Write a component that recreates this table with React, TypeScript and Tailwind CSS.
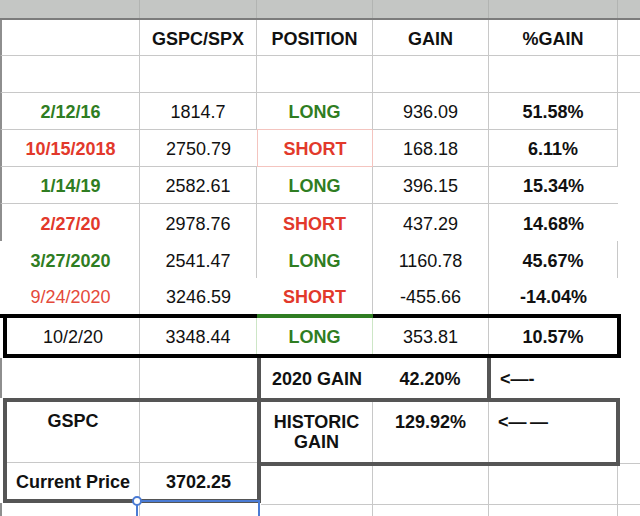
import React from "react";

const LL = "border-l-2 border-l-[#8e8e8e]";
const RB = "border-r border-r-[#c8c8c8]";
const BB = "border-b border-b-[#c8c8c8]";
const G = "text-[#2f7d22] font-bold";
const R = "text-[#e2392b] font-bold";
const B = "font-bold";

function C({
  w,
  b = "",
  c = "",
  children,
}: {
  w: string;
  b?: string;
  c?: string;
  children?: React.ReactNode;
}) {
  return (
    <div className={`${w} ${b} ${c} h-full shrink-0 flex items-center justify-center whitespace-nowrap pt-[3px]`}>
      {children}
    </div>
  );
}

export default function App() {
  return (
    <div className="relative w-[640px] h-[516px] overflow-hidden bg-white font-['Liberation_Sans',Arial,sans-serif] text-[18px] leading-[21px] text-[#111]">
      {/* top gray bar */}
      <div className="flex h-[20px] bg-[#c4c6c4] border-b-2 border-b-[#7c7c7c]">
        <div className="w-[140px] border-r border-r-[#b2b4b2]" />
        <div className="w-[117px] border-r border-r-[#b2b4b2]" />
        <div className="w-[116px] border-r border-r-[#b2b4b2]" />
        <div className="w-[116px] border-r border-r-[#b2b4b2]" />
        <div className="w-[129px] border-r border-r-[#b2b4b2]" />
        <div className="flex-1" />
      </div>

      {/* header row */}
      <div className="flex h-[36px]">
        <C w="w-[140px]" b={`${LL} ${RB} ${BB}`} />
        <C w="w-[117px]" b={`${RB} ${BB}`} c={B}>GSPC/SPX</C>
        <C w="w-[116px]" b={`${RB} ${BB}`} c={B}>POSITION</C>
        <C w="w-[116px]" b={`${RB} ${BB}`} c={B}>GAIN</C>
        <C w="w-[129px]" b={`${RB} ${BB}`} c={B}>%GAIN</C>
        <C w="w-[22px]" b={BB} />
      </div>

      {/* empty row */}
      <div className="flex h-[37px]">
        <C w="w-[140px]" b={`${LL} ${RB} ${BB}`} />
        <C w="w-[117px]" b={`${RB} ${BB}`} />
        <C w="w-[116px]" b={`${RB} ${BB}`} />
        <C w="w-[116px]" b={`${RB} ${BB}`} />
        <C w="w-[129px]" b={`${RB} ${BB}`} />
        <C w="w-[22px]" b={BB} />
      </div>

      {/* 2/12/16 */}
      <div className="flex h-[37px]">
        <C w="w-[140px]" b={`${LL} ${RB} ${BB}`} c={G}>2/12/16</C>
        <C w="w-[117px]" b={`${RB} ${BB}`}>1814.7</C>
        <C w="w-[116px]" b={`${RB} border-b border-b-[#f4c4bf]`} c={G}>LONG</C>
        <C w="w-[116px]" b={`${RB} ${BB}`}>936.09</C>
        <C w="w-[129px]" b={`${RB} ${BB}`} c={B}>51.58%</C>
      </div>

      {/* 10/15/2018 */}
      <div className="flex h-[37px]">
        <C w="w-[140px]" b={`${LL} ${RB} ${BB}`} c={R}>10/15/2018</C>
        <C w="w-[117px]" b={BB}>2750.79</C>
        <C w="w-[116px]" b="border-x border-b border-[#f4c4bf]" c={R}>SHORT</C>
        <C w="w-[116px]" b={`${RB} ${BB}`}>168.18</C>
        <C w="w-[129px]" b={`${RB} ${BB}`} c={B}>6.11%</C>
      </div>

      {/* 1/14/19 */}
      <div className="flex h-[37px]">
        <C w="w-[140px]" b={`${LL} ${RB} ${BB}`} c={G}>1/14/19</C>
        <C w="w-[117px]" b={`${RB} ${BB}`}>2582.61</C>
        <C w="w-[116px]" b={`${RB} ${BB}`} c={G}>LONG</C>
        <C w="w-[116px]" b={`${RB} ${BB}`}>396.15</C>
        <C w="w-[129px]" b={BB} c={B}>15.34%</C>
      </div>

      {/* 2/27/20 */}
      <div className="flex h-[37px]">
        <C w="w-[140px]" b={`${LL} ${RB}`} c={R}>2/27/20</C>
        <C w="w-[117px]" b={RB}>2978.76</C>
        <C w="w-[116px]" b={RB} c={R}>SHORT</C>
        <C w="w-[116px]" b={RB}>437.29</C>
        <C w="w-[129px]" c={B}>14.68%</C>
      </div>

      {/* 3/27/2020 */}
      <div className="flex h-[37px]">
        <C w="w-[140px]" b={`border-l-2 border-l-transparent ${RB}`} c={G}>3/27/2020</C>
        <C w="w-[117px]" b={RB}>2541.47</C>
        <C w="w-[116px]" b={RB} c={G}>LONG</C>
        <C w="w-[116px]" b={RB}>1160.78</C>
        <C w="w-[129px]" b={RB} c={B}>45.67%</C>
      </div>

      {/* 9/24/2020 */}
      <div className="flex h-[36px]">
        <C w="w-[140px]" b={`border-l-2 border-l-transparent ${RB}`} c="text-[#e4493a]">9/24/2020</C>
        <C w="w-[117px]">3246.59</C>
        <C w="w-[116px]" b={RB} c={R}>SHORT</C>
        <C w="w-[116px]" b={RB}>-455.66</C>
        <C w="w-[129px]" c={B}>-14.04%</C>
      </div>

      {/* 10/2/20 boxed row */}
      <div className="flex h-[4px] w-[621px]">
        <div className="w-[257px] bg-black" />
        <div className="w-[116px] bg-[#2f7d22]" />
        <div className="flex-1 bg-black" />
      </div>
      <div className="ml-[3px] w-[618px] h-[40px] flex border-x-4 border-b-4 border-black">
        <C w="w-[133px]" b={RB}>10/2/20</C>
        <C w="w-[117px]" b="border-r border-r-[#cde6c6]">3348.44</C>
        <C w="w-[116px]" b="border-r border-r-[#cde6c6]" c={G}>LONG</C>
        <C w="w-[116px]" b={RB}>353.81</C>
        <div className="flex-1 flex items-center justify-center font-bold pt-[3px]">10.57%</div>
      </div>

      {/* bottom area */}
      <div className="flex">
        {/* left */}
        <div className="w-[261px] shrink-0">
          <div className="flex h-[40px] border-r-4 border-r-[#555555]">
            <C w="w-[140px]" b={`${LL} ${RB}`} />
            <C w="w-[117px]" />
          </div>
          <div className="ml-[3px] h-[105px] border-4 border-[#555555] flex flex-col">
            <div className={`flex h-[61px] ${BB}`}>
              <div className={`w-[133px] ${RB} flex justify-center pt-[9px] font-bold`}>GSPC</div>
              <div className="flex-1" />
            </div>
            <div className="flex flex-1">
              <C w="w-[133px]" b={RB} c={B}>Current Price</C>
              <div className="flex-1 flex items-center justify-center font-bold pt-[3px]">3702.25</div>
            </div>
          </div>
          <div className="flex h-[13px]">
            <div className={`w-[140px] ${LL} ${RB}`} />
          </div>
        </div>

        {/* right */}
        <div className="flex-1">
          <div className="flex h-[40px]">
            <C w="w-[112px]" c={B}>2020 GAIN</C>
            <C w="w-[118px]" b="border-r-4 border-r-[#555555]" c={B}>42.20%</C>
            <div className="w-[130px] flex items-center pl-[9px] pt-[3px] font-bold">&lt;—-</div>
          </div>
          <div className="flex h-[68px]">
            <div className="w-[359px] shrink-0 flex border-y-4 border-r-4 border-[#555555]">
              <div className={`w-[112px] ${RB} text-center pt-[10px] font-bold leading-[20px]`}>
                HISTORIC
                <br />
                GAIN
              </div>
              <div className={`w-[116px] ${RB} flex justify-center pt-[10px] font-bold leading-[20px]`}>129.92%</div>
              <div className="flex-1 pl-[9px] pt-[10px] font-bold leading-[20px]">&lt;—&#8201;—</div>
            </div>
            <div className={`flex-1 ${BB} mb-[2px]`} />
          </div>
          <div className="flex h-[39px]">
            <C w="w-[112px]" b={`${RB} ${BB}`} />
            <C w="w-[116px]" b={`${RB} ${BB}`} />
            <C w="w-[129px]" b={`${RB} ${BB}`} />
            <div className={`flex-1 ${BB}`} />
          </div>
          <div className="flex h-[11px]">
            <C w="w-[112px]" b={RB} />
            <C w="w-[116px]" b={RB} />
            <C w="w-[129px]" b={RB} />
          </div>
        </div>
      </div>

      {/* selected cell */}
      <div className="absolute left-[136px] top-[500px] w-[124px] h-[40px] border-2 border-[#4a7bd4]" />
      <div className="absolute left-[132px] top-[496px] w-[10px] h-[10px] rounded-full border-2 border-[#4a7bd4] bg-white" />
    </div>
  );
}
